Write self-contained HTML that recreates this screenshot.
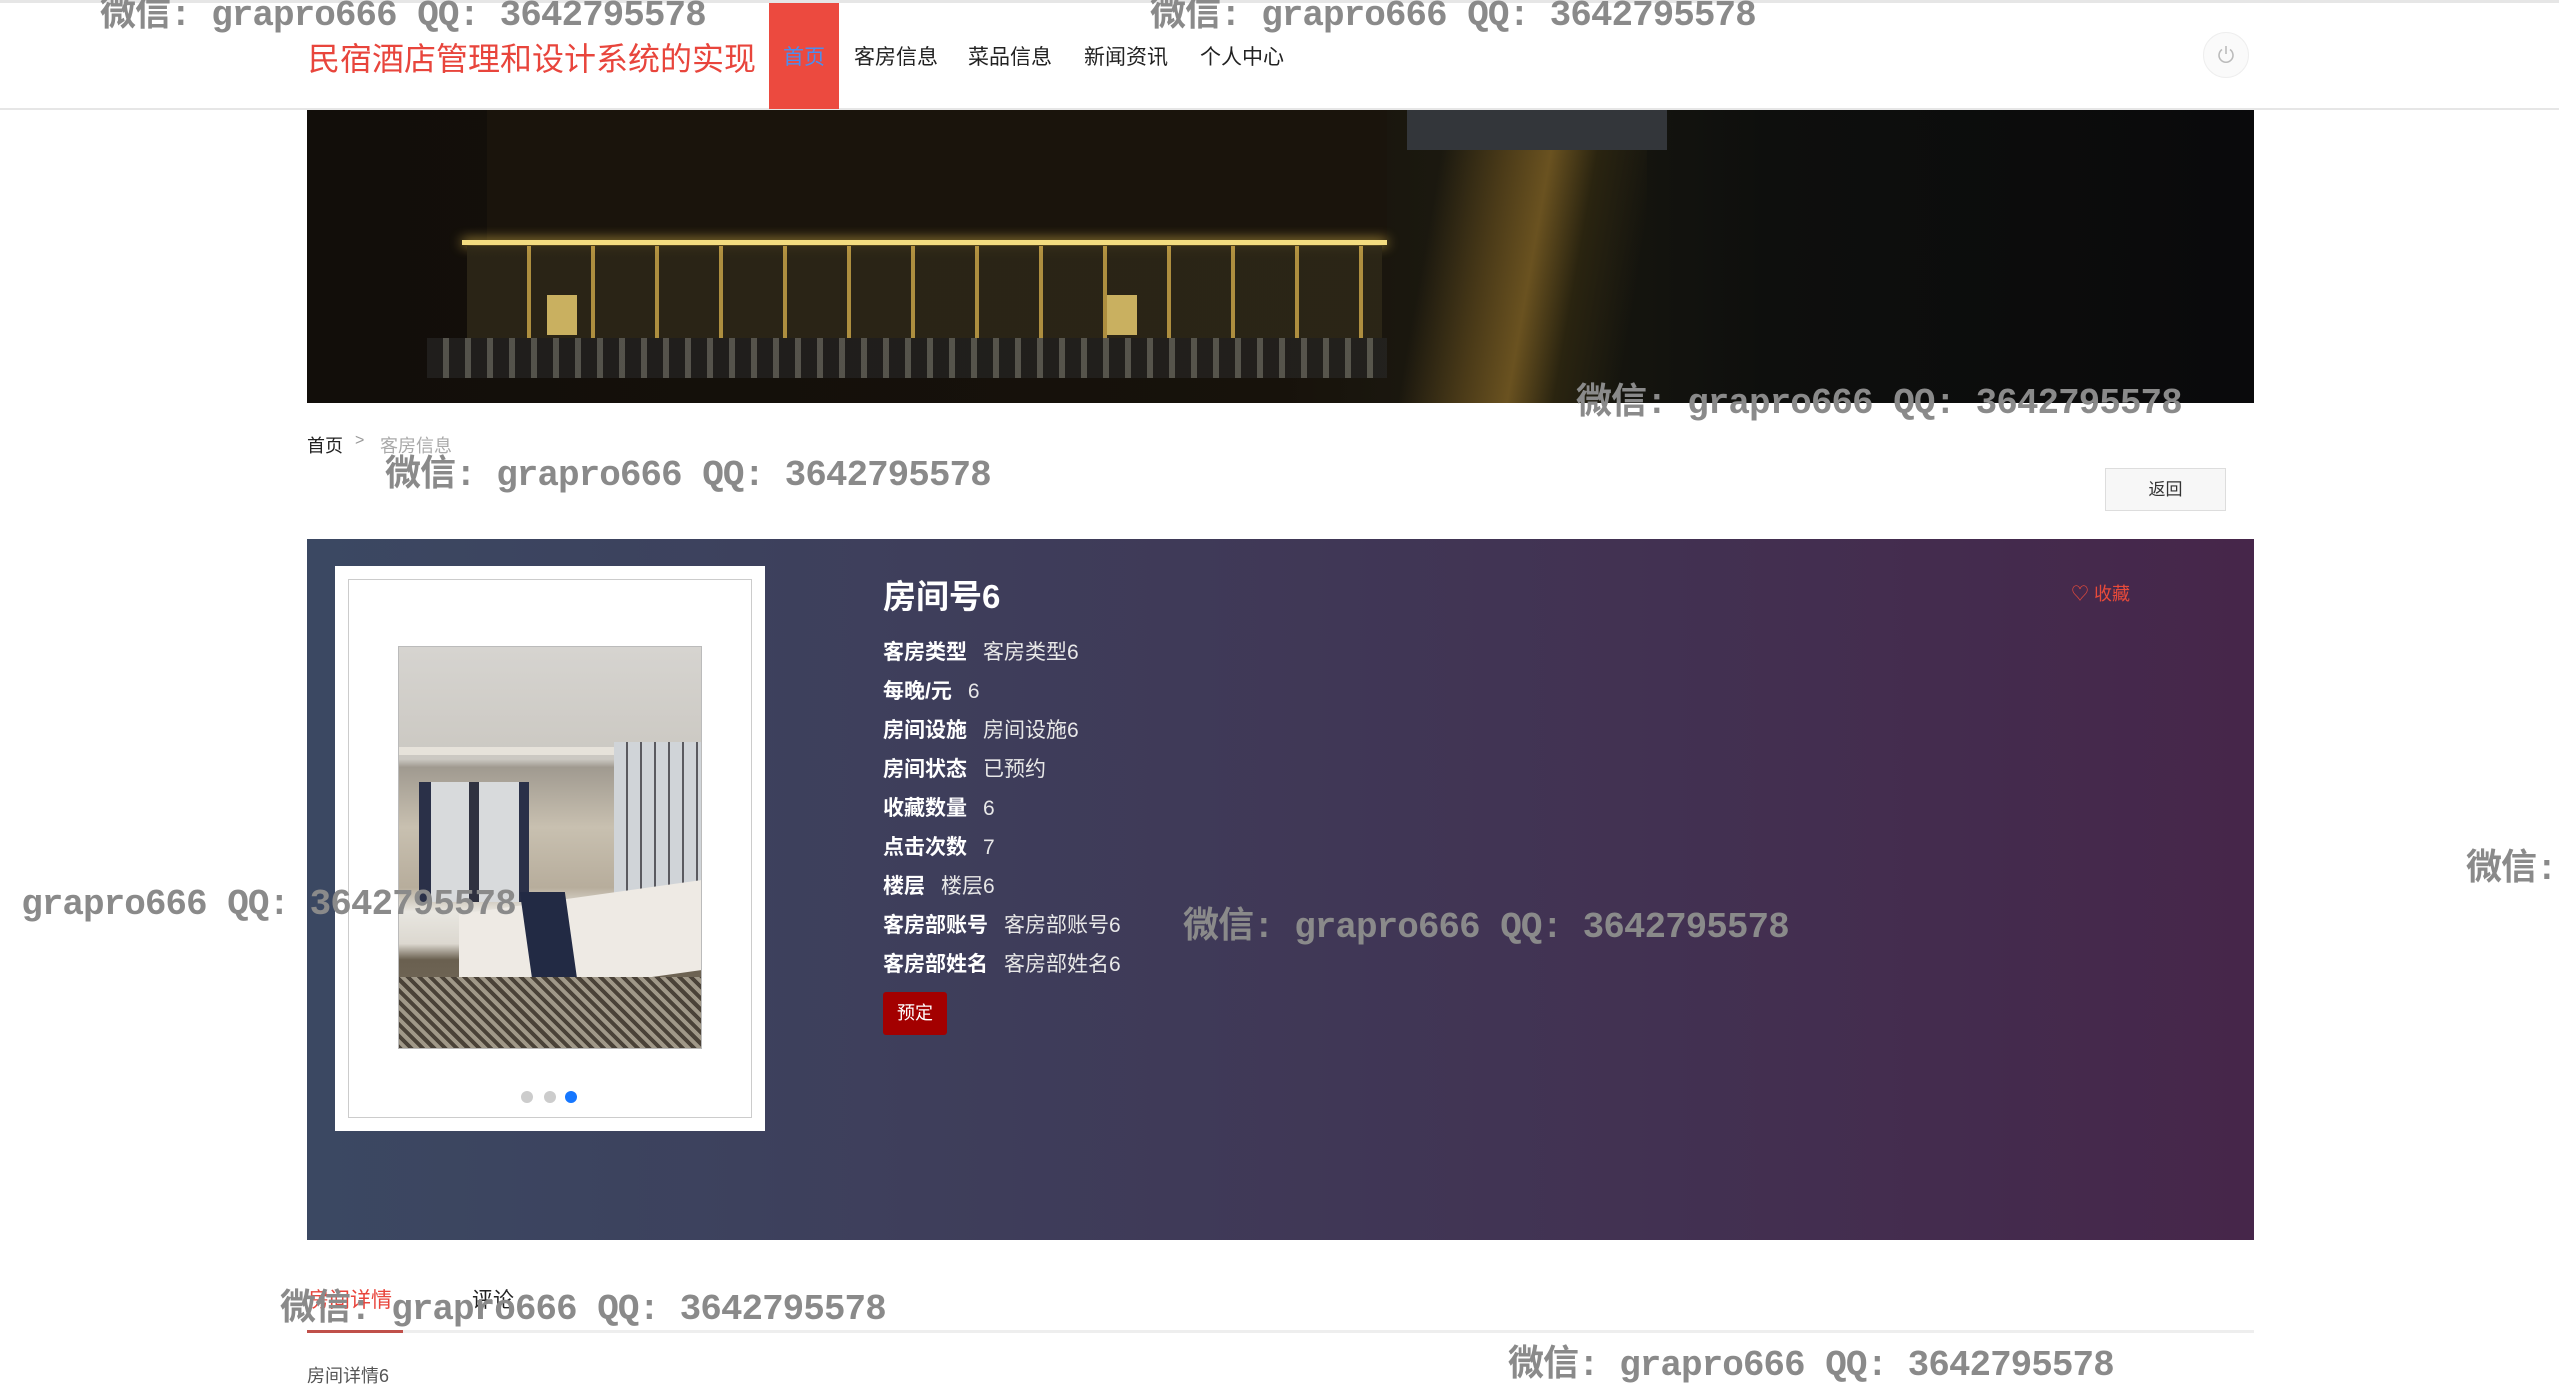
<!DOCTYPE html>
<html><head><meta charset="utf-8"><style>
*{margin:0;padding:0;box-sizing:border-box}
body{width:2559px;height:1399px;overflow:hidden;background:#fff;position:relative;font-family:"Liberation Sans","Noto Sans CJK SC",sans-serif;color:#333}
.a{position:absolute;white-space:nowrap}
.wm{position:absolute;white-space:nowrap;color:#8a8a8a;font-family:"Liberation Mono","Noto Sans CJK SC",monospace;font-size:36px;font-weight:bold;letter-spacing:-1px}
.nav{font-size:21px;color:#222;top:41px}
.row{position:absolute;left:883px;font-size:21px;color:#fff;white-space:nowrap}
.row b{font-weight:bold;margin-right:16px}
.row span{color:#e8e8e8}
</style></head><body>
<div class="a" style="left:0;top:0;width:2559px;height:3px;background:#e6e6e6"></div>
<div class="a" style="left:0;top:108px;width:2559px;height:2px;background:#e6e6e6"></div>
<div class="a" style="left:308px;top:34px;font-size:32px;color:#e8453c">民宿酒店管理和设计系统的实现</div>
<div class="a" style="left:769px;top:3px;width:70px;height:106px;background:#ec4a3f"></div>
<div class="a nav" style="left:783px;color:#4a8ef0">首页</div>
<div class="a nav" style="left:854px">客房信息</div>
<div class="a nav" style="left:968px">菜品信息</div>
<div class="a nav" style="left:1084px">新闻资讯</div>
<div class="a nav" style="left:1200px">个人中心</div>
<div class="a" style="left:2203px;top:32px;width:46px;height:46px;border-radius:50%;border:1px solid #eee;background:#fafafa"></div>
<svg class="a" style="left:2215px;top:44px" width="22" height="22" viewBox="0 0 22 22"><path d="M7 5.5A7 7 0 1 0 15 5.5" fill="none" stroke="#bbb" stroke-width="1.6"/><path d="M11 2v8" stroke="#bbb" stroke-width="1.6"/></svg>

<div class="a" style="left:307px;top:110px;width:1947px;height:293px;background:linear-gradient(90deg,#120e0a 0%,#17120b 50%,#1c1a10 60%,#0e0f0d 75%,#0a0a0c 100%);overflow:hidden">
<div class="a" style="left:180px;top:0;width:900px;height:135px;background:#1a140c"></div>
<div class="a" style="left:155px;top:130px;width:925px;height:5px;background:#f3dc80;box-shadow:0 0 12px #f0c850"></div>
<div class="a" style="left:160px;top:136px;width:915px;height:92px;background:repeating-linear-gradient(90deg,#2e2818 0 60px,#c8a448 60px 64px);opacity:.85"></div>
<div class="a" style="left:240px;top:185px;width:30px;height:40px;background:#c9b060"></div>
<div class="a" style="left:800px;top:185px;width:30px;height:40px;background:#c9b060"></div>
<div class="a" style="left:120px;top:228px;width:960px;height:40px;background:repeating-linear-gradient(90deg,#2a2a2a 0 16px,#8a8a80 16px 22px);opacity:.55"></div>
<div class="a" style="left:1080px;top:0;width:260px;height:293px;background:linear-gradient(100deg,transparent 20%,#4a3a18 40%,#6a5220 55%,#2a2410 70%,transparent 90%)"></div>
<div class="a" style="left:1100px;top:0;width:260px;height:40px;background:#33363a"></div>
</div>
<div class="wm" style="left:1576px;top:372px">微信: grapro666 QQ: 3642795578</div>
<div class="wm" style="left:100px;top:-16px">微信: grapro666 QQ: 3642795578</div>
<div class="wm" style="left:1150px;top:-16px">微信: grapro666 QQ: 3642795578</div>

<div class="a" style="left:307px;top:432px;font-size:18px;color:#222">首页</div>
<div class="a" style="left:355px;top:432px;font-size:16px;color:#999">&gt;</div>
<div class="a" style="left:380px;top:432px;font-size:18px;color:#aaa">客房信息</div>
<div class="wm" style="left:385px;top:444px">微信: grapro666 QQ: 3642795578</div>
<div class="a" style="left:2105px;top:468px;width:121px;height:43px;border:1px solid #ddd;background:#f7f7f7;font-size:17px;color:#333;text-align:center;line-height:41px">返回</div>

<div class="a" style="left:307px;top:539px;width:1947px;height:701px;background:linear-gradient(90deg,#3b4862 0%,#3f3a58 45%,#46264a 100%)"></div>
<div class="a" style="left:335px;top:566px;width:430px;height:565px;background:#fff"></div>
<div class="a" style="left:348px;top:579px;width:404px;height:539px;border:1px solid #ccc"></div>
<div class="a" style="left:398px;top:646px;width:304px;height:403px;border:1px solid #bbb;overflow:hidden;background:linear-gradient(180deg,#d6d4d0 0%,#cbc8c2 28%,#a09a90 30%,#c8c0b0 45%,#b7ad9c 60%,#e8e6e0 66%,#dcd8d0 74%,#6a6050 78%,#7a7060 100%)">
<div class="a" style="left:0;top:100px;width:304px;height:8px;background:#e6e2da"></div>
<div class="a" style="left:20px;top:135px;width:110px;height:120px;background:linear-gradient(90deg,#2a3048 0 12px,#d8dadc 12px 50px,#303240 50px 60px,#d8dadc 60px 100px,#2a3048 100px)"></div>
<div class="a" style="left:215px;top:95px;width:90px;height:160px;background:repeating-linear-gradient(90deg,#d0d4d8 0 12px,#5a5a60 12px 14px)"></div>
<div class="a" style="left:60px;top:250px;width:244px;height:90px;background:#eeeae4;transform:skewY(-8deg)"></div>
<div class="a" style="left:130px;top:245px;width:45px;height:130px;background:#222a44;transform:skewX(8deg)"></div>
<div class="a" style="left:0;top:330px;width:304px;height:73px;background:repeating-linear-gradient(45deg,#4a4238 0 4px,#a09888 4px 8px)"></div>
</div>
<div class="a" style="left:521px;top:1091px;width:12px;height:12px;border-radius:50%;background:#ccc"></div>
<div class="a" style="left:544px;top:1091px;width:12px;height:12px;border-radius:50%;background:#ccc"></div>
<div class="a" style="left:565px;top:1091px;width:12px;height:12px;border-radius:50%;background:#1677ff"></div>

<div class="a" style="left:883px;top:570px;font-size:33px;font-weight:bold;color:#fff">房间号6</div>
<div class="a" style="left:2071px;top:580px;font-size:18px;color:#e84a3a">♡ 收藏</div>
<div class="row" style="top:636px"><b>客房类型</b><span>客房类型6</span></div>
<div class="row" style="top:675px"><b>每晚/元</b><span>6</span></div>
<div class="row" style="top:714px"><b>房间设施</b><span>房间设施6</span></div>
<div class="row" style="top:753px"><b>房间状态</b><span>已预约</span></div>
<div class="row" style="top:792px"><b>收藏数量</b><span>6</span></div>
<div class="row" style="top:831px"><b>点击次数</b><span>7</span></div>
<div class="row" style="top:870px"><b>楼层</b><span>楼层6</span></div>
<div class="row" style="top:909px"><b>客房部账号</b><span>客房部账号6</span></div>
<div class="row" style="top:948px"><b>客房部姓名</b><span>客房部姓名6</span></div>
<div class="a" style="left:883px;top:992px;width:64px;height:43px;background:#a30000;border-radius:3px;color:#fff;font-size:18px;text-align:center;line-height:43px">预定</div>
<div class="wm" style="left:-20px;top:884px">: grapro666 QQ: 3642795578</div>
<div class="wm" style="left:1183px;top:896px">微信: grapro666 QQ: 3642795578</div>
<div class="wm" style="left:2466px;top:838px">微信:</div>

<div class="a" style="left:308px;top:1284px;font-size:21px;color:#e8453c">房间详情</div>
<div class="a" style="left:472px;top:1284px;font-size:21px;color:#222">评论</div>
<div class="wm" style="left:280px;top:1278px">微信: grapro666 QQ: 3642795578</div>
<div class="a" style="left:307px;top:1330px;width:1947px;height:3px;background:#eee"></div>
<div class="a" style="left:307px;top:1330px;width:96px;height:3px;background:#c0504a"></div>
<div class="a" style="left:307px;top:1362px;font-size:18px;color:#555">房间详情6</div>
<div class="wm" style="left:1508px;top:1334px">微信: grapro666 QQ: 3642795578</div>
</body></html>
